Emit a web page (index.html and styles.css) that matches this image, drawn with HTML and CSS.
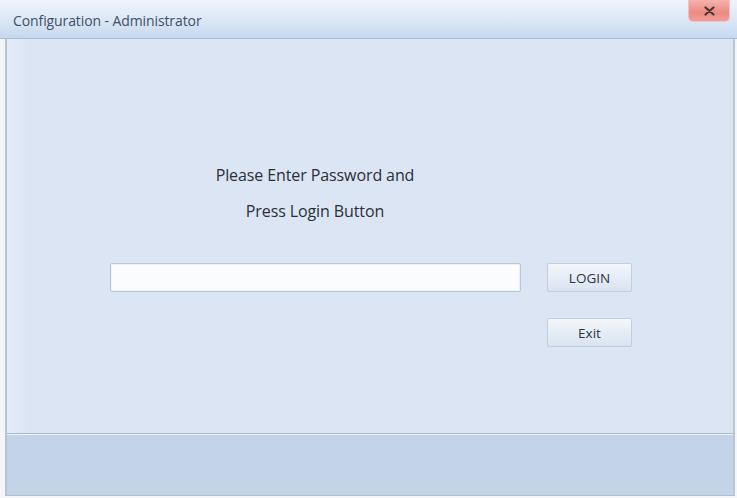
FILE: index.html
```html
<!DOCTYPE html>
<html lang="en">
    <head>
        <meta charset="UTF-8" />
        <meta name="viewport" content="width=device-width, initial-scale=1.0" />
        <title>Configuration - Administrator</title>
        <link rel="stylesheet" href="styles.css">
    </head>
    <body>
        <div class="window">
            <div class="titlebar">
                <span class="title">Configuration - Administrator</span>
                <button class="close" aria-label="Close">
                    <svg width="11" height="10" viewBox="0 0 11 10">
                        <path d="M1.5 1.5 L9.5 8.5 M9.5 1.5 L1.5 8.5" stroke="#4a3434" stroke-width="2.2" stroke-linecap="round" />
                    </svg>
                </button>
            </div>
            <div class="frame">
                <div class="content">
                    <div class="message">
                        <p>Please Enter Password and</p>
                        <p>Press Login Button</p>
                    </div>
                    <div class="form">
                        <input class="password" type="password" />
                        <div class="buttons">
                            <button class="btn">LOGIN</button>
                            <button class="btn">Exit</button>
                        </div>
                    </div>
                </div>
                <div class="footer"></div>
            </div>
        </div>
    </body>
</html>
```

FILE: styles.css
```css
* {
    padding: 0;
    margin: 0;
    box-sizing: border-box;
}
body {
    background-color: #f4f6f9;
    font-family: "Open Sans", "DejaVu Sans", sans-serif;
    color: #2b2f36;
}
.window {
    width: 737px;
    height: 498px;
    display: flex;
    flex-direction: column;
}
.titlebar {
    height: 39px;
    flex-shrink: 0;
    display: flex;
    justify-content: space-between;
    align-items: flex-start;
    padding: 0 8px 0 13px;
    background: linear-gradient(#eef3fa, #dde8f6 50%, #c6d8ef);
    border-bottom: 1px solid #a9bdd6;
}
.title {
    margin-top: 11px;
    font-size: 14px;
    color: #3f5067;
    letter-spacing: -0.1px;
}
.close {
    all: unset;
    width: 40px;
    height: 21px;
    display: flex;
    justify-content: center;
    align-items: center;
    border-radius: 0 0 4px 4px;
    background: linear-gradient(#f5b3ae, #ec8a84 60%, #f09d97);
    box-shadow: 0 0 0 1px #eec2c0;
}
.frame {
    flex: 1;
    display: flex;
    flex-direction: column;
    margin: 0 2px 2px 5px;
    border-left: 2px solid #b8c3d2;
    border-right: 2px solid #bcc6d3;
    border-bottom: 1px solid #b3bfce;
}
.content {
    flex: 1;
    background: linear-gradient(90deg, #e4ecf7, #dbe5f4 3%, #dbe5f4);
    padding: 118px 0 0 103px;
}
.message {
    width: 410px;
    text-align: center;
    font-size: 16px;
    line-height: 36px;
    letter-spacing: -0.1px;
}
.form {
    display: flex;
    gap: 26px;
    margin-top: 34px;
}
.password {
    width: 411px;
    height: 29px;
    border: 1px solid #b9c6d6;
    border-radius: 2px;
    background-color: #fbfcfe;
    box-shadow: inset 0 0 0 1px #eef2f8;
}
.buttons {
    display: flex;
    flex-direction: column;
    gap: 26px;
}
.btn {
    all: unset;
    width: 85px;
    height: 29px;
    display: flex;
    justify-content: center;
    align-items: center;
    font-size: 13.5px;
    color: #2e3440;
    border: 1px solid #c2cedd;
    border-radius: 2px;
    background: linear-gradient(#f4f7fb, #e6edf6 50%, #d9e3f0);
    box-sizing: border-box;
}
.footer {
    height: 62px;
    flex-shrink: 0;
    background-color: #c3d4e9;
    border-top: 1px solid #a8bad0;
    box-shadow: inset 0 1px 0 #eef4fb;
}
```
